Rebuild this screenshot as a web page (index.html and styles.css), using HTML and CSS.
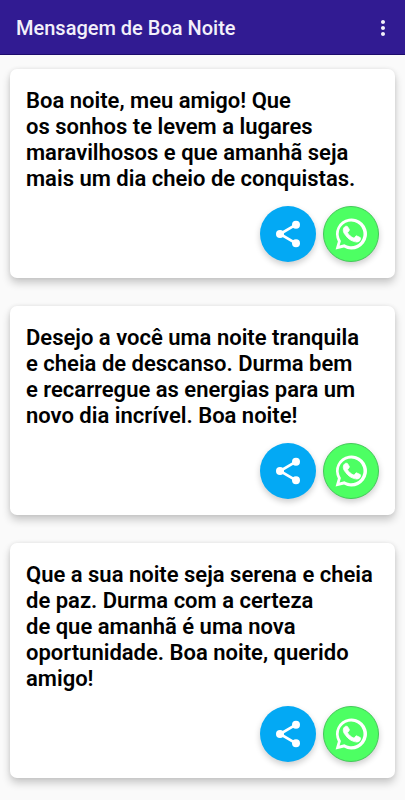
FILE: index.html
```html
<!DOCTYPE html>
<html lang="pt-BR">
<head>
  <meta charset="UTF-8">
  <meta name="viewport" content="width=device-width, initial-scale=1.0">
  <title>Mensagem de Boa Noite</title>
  <link rel="stylesheet" href="styles.css">
</head>
<body>
  <!-- Shared icons -->
  <svg class="icon-defs" aria-hidden="true">
    <symbol id="icon-share" viewBox="0 0 24 24">
      <path d="M18 5 6 12l12 7" fill="none" stroke="currentColor" stroke-width="2"/>
      <circle cx="18" cy="5" r="3"/>
      <circle cx="6" cy="12" r="3"/>
      <circle cx="18" cy="19" r="3"/>
    </symbol>
    <symbol id="icon-whatsapp" viewBox="0 0 32 32">
      <path fill-rule="evenodd" d="M.6 31.500 2.900 23.400A15.500 15.500 0 1 1 9 29.500zM5.900 23 4.600 27.500 9.300 26.300A12.400 12.400 0 1 0 5.900 23z"/>
      <path d="M11.600 8.200c-.4-.8-.8-.8-1.200-.8h-1c-.4 0-.9.200-1.400.7-.5.500-1.800 1.700-1.800 4.200s1.900 4.900 2.100 5.200c.3.300 3.600 5.700 8.900 7.700 4.400 1.700 5.300 1.400 6.200 1.300 1-.1 3.100-1.200 3.500-2.500.4-1.200.4-2.200.3-2.500-.1-.2-.5-.3-1-.6l-3.600-1.700c-.5-.2-.8-.3-1.200.3l-1.600 2c-.3.400-.6.400-1.100.1-.5-.2-2.200-.8-4.200-2.500-1.500-1.400-2.600-3-2.900-3.500-.3-.6 0-.8.200-1.100l1.200-1.400c.3-.4.300-.6.500-1 .2-.3.100-.6 0-.9z" stroke="currentColor" stroke-width="1" stroke-linejoin="round" transform="translate(3.200 2.200) scale(.82)"/>
    </symbol>
  </svg>

  <header class="toolbar">
    <h1>Mensagem de Boa Noite</h1>
    <button class="menu-btn" type="button" aria-label="Mais opções">
      <svg viewBox="0 0 24 24"><path d="M12 8c1.100 0 2-.9 2-2s-.9-2-2-2-2 .9-2 2 .9 2 2 2zm0 2c-1.100 0-2 .9-2 2s.9 2 2 2 2-.9 2-2-.9-2-2-2zm0 6c-1.100 0-2 .9-2 2s.9 2 2 2 2-.9 2-2-.9-2-2-2z"/></svg>
    </button>
  </header>

  <main class="messages">
    <article class="card">
      <p>Boa noite, meu amigo! Que<br>os sonhos te levem a lugares<br>maravilhosos e que amanhã seja<br>mais um dia cheio de conquistas.</p>
      <div class="actions">
        <button class="round-btn share" type="button" aria-label="Compartilhar"><svg><use href="#icon-share"/></svg></button>
        <button class="round-btn whatsapp" type="button" aria-label="Enviar pelo WhatsApp"><svg><use href="#icon-whatsapp"/></svg></button>
      </div>
    </article>

    <article class="card">
      <p>Desejo a você uma noite tranquila<br>e cheia de descanso. Durma bem<br>e recarregue as energias para um<br>novo dia incrível. Boa noite!</p>
      <div class="actions">
        <button class="round-btn share" type="button" aria-label="Compartilhar"><svg><use href="#icon-share"/></svg></button>
        <button class="round-btn whatsapp" type="button" aria-label="Enviar pelo WhatsApp"><svg><use href="#icon-whatsapp"/></svg></button>
      </div>
    </article>

    <article class="card">
      <p>Que a sua noite seja serena e cheia<br>de paz. Durma com a certeza<br>de que amanhã é uma nova<br>oportunidade. Boa noite, querido<br>amigo!</p>
      <div class="actions">
        <button class="round-btn share" type="button" aria-label="Compartilhar"><svg><use href="#icon-share"/></svg></button>
        <button class="round-btn whatsapp" type="button" aria-label="Enviar pelo WhatsApp"><svg><use href="#icon-whatsapp"/></svg></button>
      </div>
    </article>
  </main>
</body>
</html>
```
FILE: styles.css
```css
* {
  margin: 0;
  padding: 0;
  box-sizing: border-box;
}

body {
  font-family: Roboto, sans-serif;
  background-color: #fafafa;
  color: #000;
}

.icon-defs {
  display: none;
}

.toolbar {
  display: flex;
  align-items: center;
  justify-content: space-between;
  height: 55px;
  padding: 2px 10px 0 16px;
  background-color: #311b92;
  border-bottom: 1px solid #1d0c6b;
  color: #f3f0fa;
}

.toolbar h1 {
  font-size: 20px;
  font-weight: 500;
}

.menu-btn {
  width: 24px;
  height: 24px;
  border: none;
  background: none;
  color: inherit;
  cursor: pointer;
}

.menu-btn svg {
  display: block;
  fill: currentColor;
}

.messages {
  display: flex;
  flex-direction: column;
  gap: 28px;
  padding: 14px 10px 24px;
}

.card {
  padding: 19px 16px 16px;
  background-color: #fff;
  border-radius: 7px;
  box-shadow: 0 5px 9px rgba(0, 0, 0, 0.2), 0 0 4px rgba(0, 0, 0, 0.08);
}

.card p {
  font-size: 22px;
  font-weight: 600;
  line-height: 26px;
  white-space: nowrap;
}

.actions {
  display: flex;
  justify-content: flex-end;
  gap: 7px;
  margin-top: 14px;
}

.round-btn {
  display: flex;
  align-items: center;
  justify-content: center;
  width: 56px;
  height: 56px;
  border: none;
  border-radius: 50%;
  color: #fff;
  box-shadow: 0 3px 6px rgba(0, 0, 0, 0.2);
  cursor: pointer;
}

.round-btn svg {
  width: 32px;
  height: 32px;
  fill: currentColor;
}

.share {
  background-color: #03a9f4;
}

.whatsapp {
  background-color: #4dff63;
  border: 1px solid #45c85a;
}
```
